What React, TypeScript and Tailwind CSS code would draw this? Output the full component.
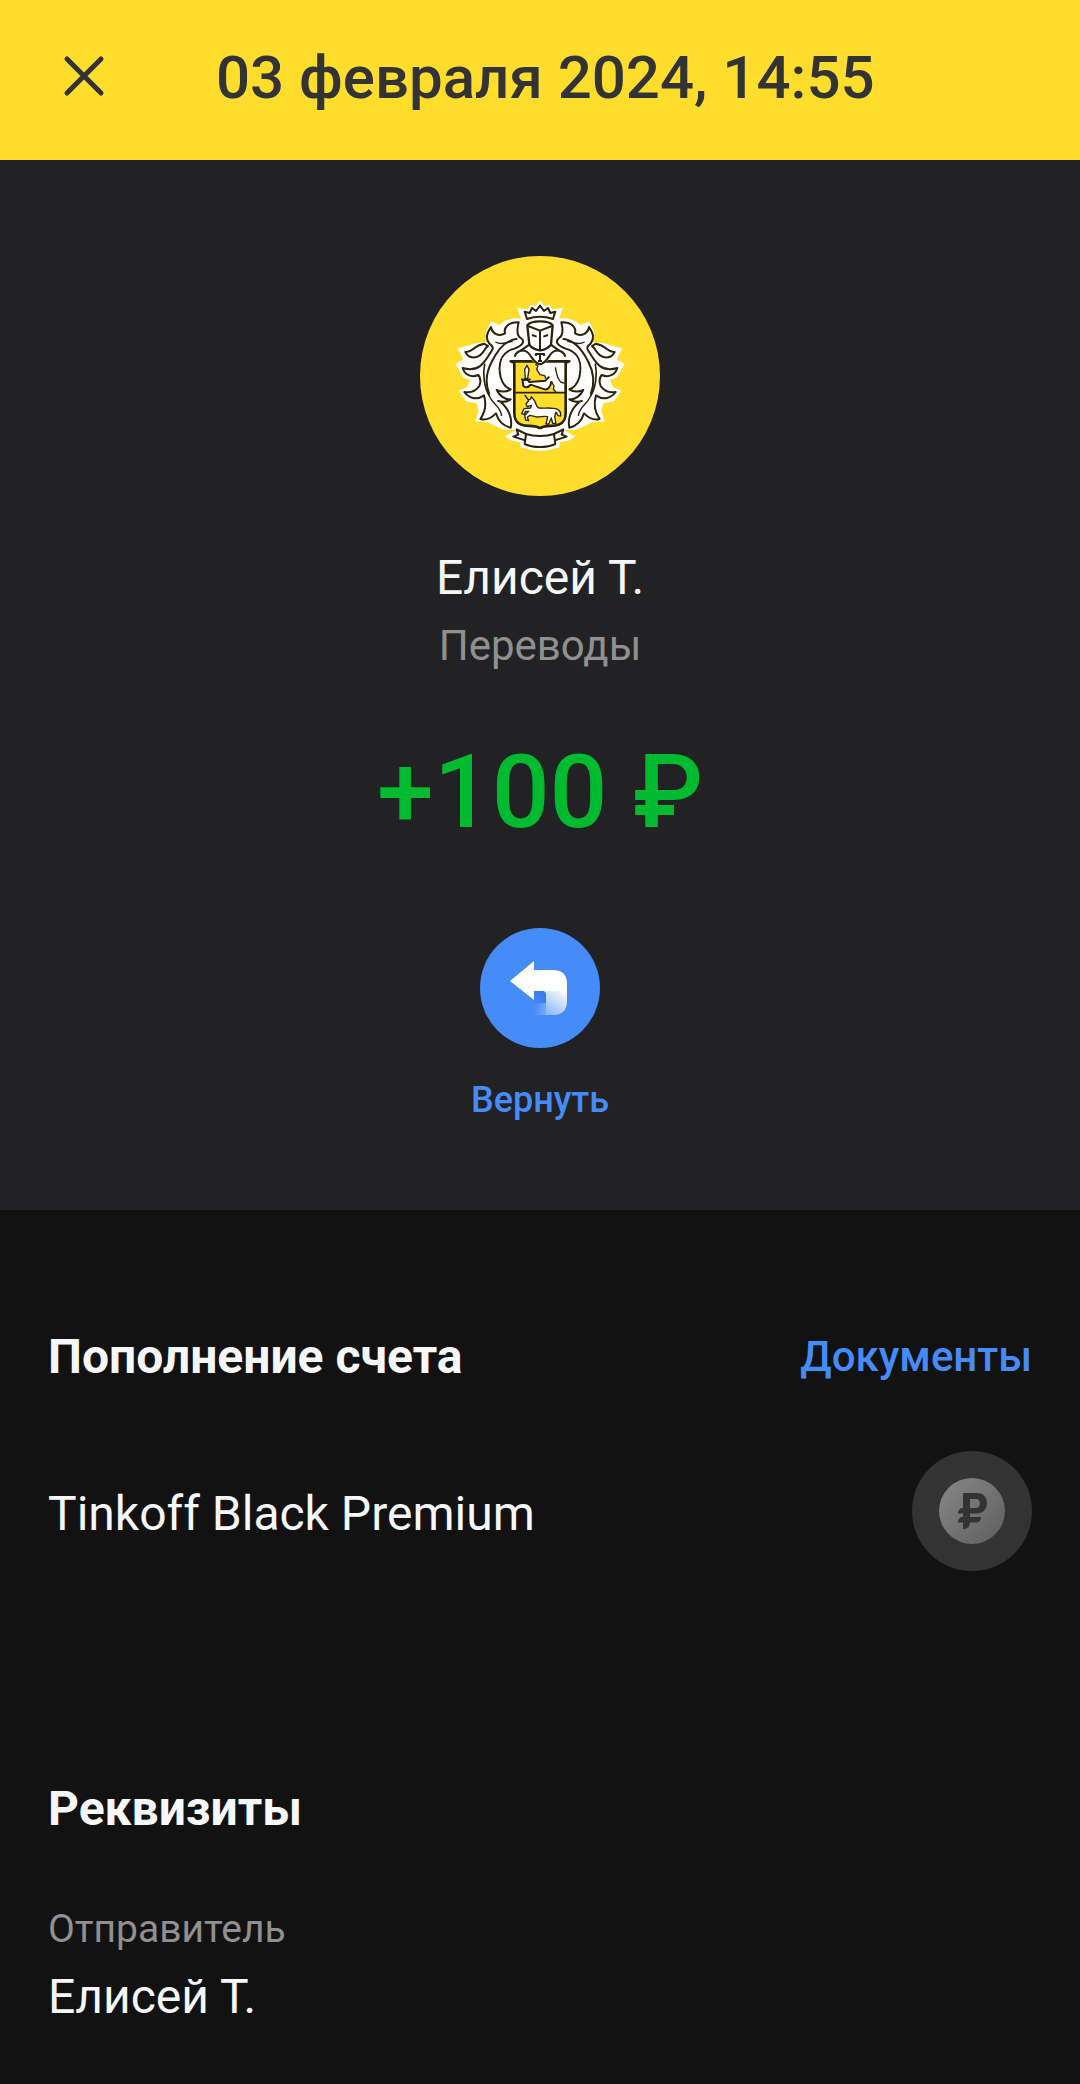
import React from "react";

const INK = "#2a220c";

const HALF_OUTLINE =
  "M390 215 L352 222 L340 222 C320 212 290 216 268 238 L243 226 L226 262 L232 288 C190 290 172 302 143 306 L160 340 L136 354 L160 394 L180 402 L172 422 L146 434 L168 466 L200 472 L206 496 L196 526 L232 528 L256 540 L284 552 L318 552 L284 572 L306 584 L330 588 L332 604 Q360 614 390 614 Z";

function HalfCrest() {
  return (
    <g>
      <path d="M334 277 C316 268 322 244 326 229 C298 228 280 242 285 262 C266 274 246 262 243 243 C230 262 226 276 238 293 C248 300 252 306 244 316 C222 352 206 380 158 366 C164 386 184 396 205 387 C214 398 212 410 208 420 C196 438 182 441 163 438 C176 456 200 464 222 448 C230 474 224 500 211 519 C228 524 246 514 258 502 C264 524 280 540 302 545 C308 518 296 488 272 468" />
      <path d="M334 277 C350 292 326 304 304 311 C276 322 262 350 272 394 C278 414 288 426 302 430 C288 440 274 438 260 432 C268 448 284 462 302 460 C290 468 276 470 262 464" />
      <path d="M322 278 C286 282 262 312 245 348 C230 376 224 410 238 446" />
      <path d="M224 352 C218 384 222 424 238 450" strokeWidth="5" />
      <path d="M238 448 C244 472 272 480 275 510" strokeWidth="4" />
      <path d="M256 288 C274 298 290 290 308 286" strokeWidth="4" />
      <path d="M166 318 C186 322 190 298 222 293 L234 300 C222 306 222 330 196 334 C180 336 172 330 166 318 Z" />
      <path d="M390 547 C372 534 350 544 334 536 C318 530 313 520 313 500 L313 350 L302 346 L390 346" strokeWidth="8" />
      <path d="M390 570 Q366 570 348 564 L344 594 C360 602 376 603 390 603" />
      <path d="M348 564 L320 550 L325 566 L310 572 L346 583" />
    </g>
  );
}

function Crest() {
  return (
    <svg
      viewBox="30 30 720 720"
      className="size-full"
      fill="none"
      stroke={INK}
      strokeWidth="6"
      strokeLinejoin="round"
      role="img"
      aria-label="Tinkoff"
    >
      <g fill="#fff" stroke="none">
        <path d={HALF_OUTLINE} />
        <path d={HALF_OUTLINE} transform="translate(780 0) scale(-1 1)" />
        <path d="M321 186 L352 190 L362 176 L376 180 L390 164 L404 180 L418 176 L428 190 L459 186 L438 240 L342 240 Z" />
      </g>
      <path
        d="M313 346 H468 V500 C468 526 462 538 440 538 C424 540 406 536 390 548 C374 536 356 542 340 538 C320 532 313 520 313 500 Z"
        fill="#ffdd2d"
        stroke="none"
      />
      <path
        d="M376 348 L384 358 L380 368 L390 386 L402 388 L407 398 L418 392 L424 406 L434 437 L464 437 L466 348 Z"
        fill="#fff"
        stroke="none"
      />
      <HalfCrest />
      <g transform="translate(780 0) scale(-1 1)">
        <HalfCrest />
      </g>
      <path d="M376 354 L384 360 L380 370 L390 386 L404 389 L408 398" strokeWidth="4" />
      <path d="M436 364 C440 382 440 396 452 408 L464 412 M424 406 L432 420 L430 430 L438 438" strokeWidth="4" />
      <path
        d="M418 392 L406 404 L358 408 C354 400 344 400 338 404 L340 420 C348 426 356 424 362 416 L404 430 C414 432 422 422 424 406"
        fill="#fff"
      />
      <path d="M346 397 L344 370 L351 358 L357 370 L353 397 Z" fill="#fff" strokeWidth="4" />
      <path d="M333 400 H362" strokeWidth="5" />
      <path d="M316 440 H466" strokeWidth="5" />
      <path
        d="M345 448 L356 462 L362 459 L364 452 L371 461 C378 466 376 480 386 486 C398 488 416 484 428 487 C444 486 454 496 452 510 L444 509 L438 498 L434 512 L438 532 H428 L424 516 L416 534 H408 L413 512 C400 508 388 516 376 512 L360 508 L352 514 L356 524 L347 522 L344 508 L356 496 L346 496 L344 506 L335 503 L342 488 L362 486 L364 478 L352 482 L348 474 L356 464 Z"
        fill="#fff"
        strokeWidth="4"
      />
      <path d="M352 304 C362 320 378 326 390 327 C402 326 418 320 428 304 L442 312 C420 330 414 354 390 355 C366 354 360 330 338 312 Z" fill="#fff" stroke="none" />
      <path d="M314 332 C318 316 336 310 348 316 C364 322 366 350 390 355 C414 350 416 322 432 316 C444 310 462 316 466 332" />
      <path d="M332 314 L358 296 M448 314 L422 296" />
      <path
        d="M352 238 C362 222 418 222 428 238 L423 296 C412 308 400 312 390 313 C380 312 366 308 358 296 Z"
        fill="#fff"
        strokeWidth="7"
      />
      <path d="M354 240 L390 254 L426 240 M390 254 V312" />
      <path d="M366 267 L380 272 M400 272 L414 267" />
      <path d="M351 219 L344 197 L359 201 L366 186 L378 195 L390 179 L402 195 L414 186 L421 201 L436 197 L429 219 C404 210 376 210 351 219 Z" fill="#fff" />
      <path d="M378 330 V324 H402 V330 M390 324 V345 M384 345 H396" />
    </svg>
  );
}

function ReturnIcon() {
  return (
    <svg viewBox="0 0 120 120" className="size-full" aria-hidden="true">
      <defs>
        <linearGradient id="tail" x1="84" y1="62" x2="66" y2="90" gradientUnits="userSpaceOnUse">
          <stop offset="0" stopColor="#fff" />
          <stop offset="1" stopColor="#fff" stopOpacity="0.3" />
        </linearGradient>
        <linearGradient id="tailEnd" x1="66" y1="0" x2="54" y2="0" gradientUnits="userSpaceOnUse">
          <stop offset="0" stopColor="#fff" stopOpacity="0.3" />
          <stop offset="1" stopColor="#fff" stopOpacity="0" />
        </linearGradient>
        <linearGradient id="shade" x1="66" y1="66" x2="54" y2="80" gradientUnits="userSpaceOnUse">
          <stop offset="0" stopColor="#2f6fdc" stopOpacity="0.6" />
          <stop offset="1" stopColor="#2f6fdc" stopOpacity="0" />
        </linearGradient>
      </defs>
      <path d="M54 87 V63 H63 L66 66 V87 Z" fill="url(#shade)" />
      <path d="M54 75 H66 V87 H54 Z" fill="url(#tailEnd)" />
      <path d="M66 63 H87 V73 Q87 87 73 87 H66 Z" fill="url(#tail)" />
      <path d="M30 53 L54 33 V42 H73 Q87 42 87 56 V63 H66 V66 Q66 63 63 63 H54 V72 Z" fill="#fff" />
    </svg>
  );
}

function RubleCoin() {
  return (
    <svg viewBox="0 0 120 120" className="size-full" aria-hidden="true">
      <defs>
        <linearGradient id="coin" x1="36" y1="36" x2="84" y2="84" gradientUnits="userSpaceOnUse">
          <stop offset="0" stopColor="#828282" />
          <stop offset="1" stopColor="#646464" />
        </linearGradient>
      </defs>
      <circle cx="60" cy="60" r="33" fill="url(#coin)" />
      <path
        fillRule="evenodd"
        fill="#333"
        d="M51 42 H65 C71 42 75 46 75 52 C75 58 71 62.500 65 62.500 H58 V66 H69 C69 69.500 67 71.500 64 71.500 H58 C58 75 56 78 51 78 V71.500 H46 C46 68 48 66 51 66 V62.500 H46 C46 59 48 57 51 57 Z M58 48 V57 H64 C66.500 57 68 55 68 52.500 C68 50 66.500 48 64 48 Z"
      />
    </svg>
  );
}

export default function App() {
  return (
    <div className="min-h-screen bg-[#121212] font-['Roboto',sans-serif] text-[#f6f7f8]">
      <header className="flex h-40 items-center bg-[#ffdd2d] px-12 pb-1 text-[#333333]">
        <button type="button" aria-label="Закрыть" className="flex size-18 shrink-0 items-center justify-center pb-1">
          <svg viewBox="0 0 44 44" className="size-11" fill="none" stroke="currentColor" strokeWidth="5" strokeLinecap="round" aria-hidden="true">
            <path d="M5 5 L39 39 M39 5 L5 39" />
          </svg>
        </button>
        <h1 className="ml-24 text-[60px] leading-[72px] font-medium whitespace-nowrap">03 февраля 2024, 14:55</h1>
      </header>

      <main>
        <section className="flex flex-col items-center bg-[#222224] pt-24 pb-22 text-center">
          <div className="size-60 overflow-hidden rounded-full bg-[#ffdd2d]">
            <Crest />
          </div>
          <h2 className="mt-[52px] text-5xl leading-[60px] font-normal">Елисей Т.</h2>
          <p className="mt-2 text-[42px] leading-[60px] text-[#909090]">Переводы</p>
          <p className="mt-14 text-[102px] leading-[120px] font-medium text-[#00ba2f]">+100 ₽</p>
          <button type="button" className="mt-19 flex flex-col items-center text-[#458cf8]">
            <span className="size-30 rounded-full bg-[#458cf8]">
              <ReturnIcon />
            </span>
            <span className="mt-[30px] text-4xl leading-[44px] font-medium">Вернуть</span>
          </button>
        </section>

        <section className="px-12 pt-[117px]">
          <div className="flex items-center justify-between">
            <h2 className="text-5xl leading-[60px] font-bold">Пополнение счета</h2>
            <a href="#documents" className="text-[42px] leading-[60px] font-medium text-[#458cf8]">Документы</a>
          </div>
          <div className="mt-16 flex items-center justify-between">
            <p className="pt-1.5 text-5xl leading-[60px]">Tinkoff Black Premium</p>
            <div className="size-30 rounded-full bg-[#333333]">
              <RubleCoin />
            </div>
          </div>
        </section>

        <section className="px-12 pt-52 pb-12">
          <h2 className="text-5xl leading-[60px] font-bold">Реквизиты</h2>
          <dl className="mt-15">
            <dt className="text-[39px] leading-[60px] text-[#909090]">Отправитель</dt>
            <dd className="mt-2 text-5xl leading-[60px]">Елисей Т.</dd>
          </dl>
        </section>
      </main>
    </div>
  );
}
